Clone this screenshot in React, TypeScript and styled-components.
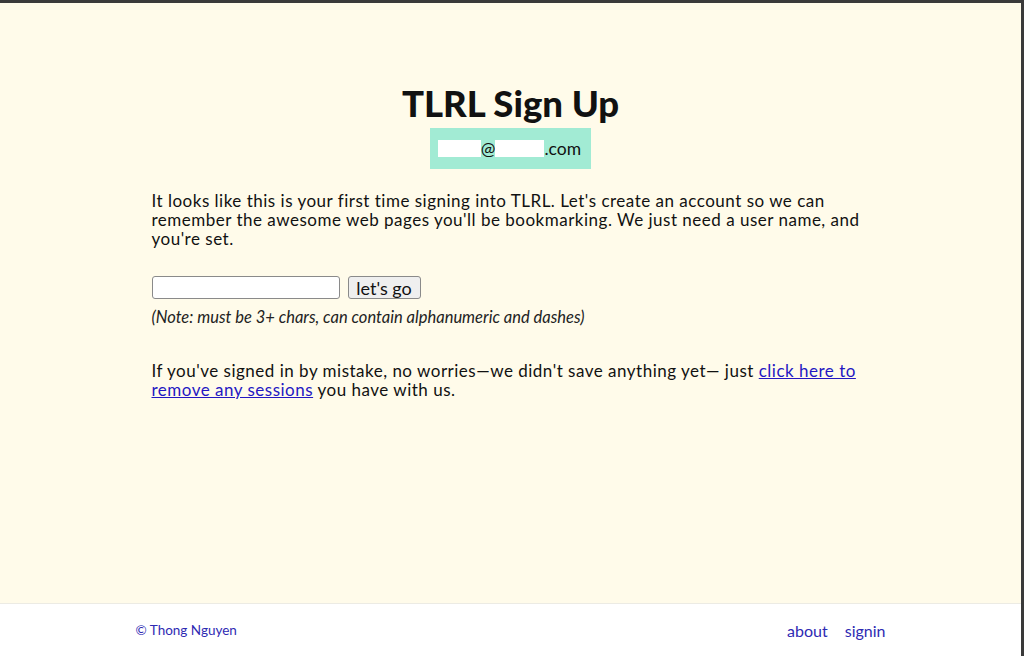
import styled, { createGlobalStyle } from 'styled-components';

const GlobalStyle = createGlobalStyle`
  html, body {
    margin: 0;
    height: 100%;
  }
  body {
    font-family: Lato, "Noto Sans", sans-serif;
    color: #111;
    background: #fffbea;
  }
`;

const Frame = styled.div`
  height: 656px;
  box-sizing: border-box;
  border-top: 3px solid #3a3a3a;
  border-right: 3px solid #3a3a3a;
  display: flex;
  flex-direction: column;
  background: #fffbea;
  overflow: hidden;
`;

const Main = styled.main`
  flex: 1;
  display: flex;
  flex-direction: column;
  align-items: center;
  padding-top: 79px;
`;

const Title = styled.h1`
  margin: 0;
  font-size: 36.5px;
  font-weight: 900;
  line-height: 43px;
  color: #111;
`;

const EmailBadge = styled.div`
  margin-top: 3px;
  display: flex;
  align-items: center;
  height: 41px;
  box-sizing: border-box;
  padding: 0 10px 0 8px;
  background: #a2ebd4;
  font-size: 17.5px;
`;

const Redacted = styled.span<{ $w: number }>`
  display: inline-block;
  width: ${(p) => p.$w}px;
  height: 17px;
  background: #fff;
`;

const Content = styled.section`
  width: 720px;
  margin: 22px 0 0 2px;
  font-size: 17px;
  letter-spacing: 0.5px;
  line-height: 19px;
`;

const Para = styled.p`
  margin: 0;
`;

const Form = styled.form`
  margin-top: 28px;
  display: flex;
  align-items: center;
  gap: 8px;
  letter-spacing: normal;
`;

const TextInput = styled.input`
  width: 188px;
  height: 23px;
  box-sizing: border-box;
  border: 1px solid #8a8a8a;
  border-radius: 3px;
  background: #fff;
`;

const GoButton = styled.button`
  height: 23px;
  width: 73px;
  padding: 0;
  font-family: inherit;
  font-size: 18px;
  line-height: 20px;
  color: #111;
  background: #efefef;
  border: 1px solid #8a8a8a;
  border-radius: 3px;
`;

const Note = styled.p`
  margin: 9px 0 0;
  font-size: 16.5px;
  letter-spacing: normal;
  font-style: italic;
  color: #222;
`;

const Closing = styled.p`
  margin: 34px 0 0;
`;

const TextLink = styled.a`
  color: #2417c2;
  text-decoration: underline;
`;

const Footer = styled.footer`
  height: 52px;
  flex-shrink: 0;
  background: #fff;
  border-top: 1px solid #ecebe4;
  display: flex;
  justify-content: center;
  align-items: center;
`;

const FooterInner = styled.div`
  width: 750px;
  display: flex;
  justify-content: space-between;
  align-items: center;
`;

const Copy = styled.span`
  font-size: 13.5px;
  color: #2e2ab3;
`;

const FooterNav = styled.nav`
  display: flex;
  gap: 17px;
`;

const FooterLink = styled.a`
  font-size: 16px;
  color: #2e2ab3;
  text-decoration: none;
`;

export default function App() {
  return (
    <Frame>
      <GlobalStyle />
      <Main>
        <Title>TLRL Sign Up</Title>
        <EmailBadge>
          <Redacted $w={43} />
          @
          <Redacted $w={49} />
          .com
        </EmailBadge>
        <Content>
          <Para>
            It looks like this is your first time signing into TLRL. Let's create an account so we can
            remember the awesome web pages you'll be bookmarking. We just need a user name, and
            you're set.
          </Para>
          <Form onSubmit={(e) => e.preventDefault()}>
            <TextInput type="text" />
            <GoButton type="submit">let's go</GoButton>
          </Form>
          <Note>(Note: must be 3+ chars, can contain alphanumeric and dashes)</Note>
          <Closing>
            If you've signed in by mistake, no worries—we didn't save anything yet— just{' '}
            <TextLink href="#">click here to remove any sessions</TextLink> you have with us.
          </Closing>
        </Content>
      </Main>
      <Footer>
        <FooterInner>
          <Copy>© Thong Nguyen</Copy>
          <FooterNav>
            <FooterLink href="#">about</FooterLink>
            <FooterLink href="#">signin</FooterLink>
          </FooterNav>
        </FooterInner>
      </Footer>
    </Frame>
  );
}
